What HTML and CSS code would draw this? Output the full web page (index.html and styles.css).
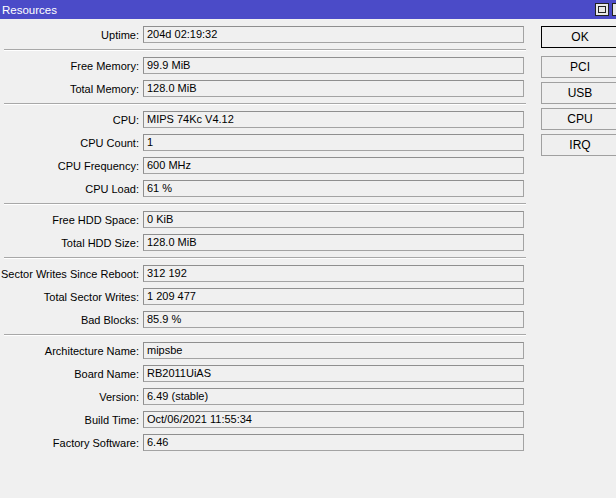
FILE: index.html
```html
<!DOCTYPE html>
<html>
<head>
<meta charset="utf-8">
<title>Resources</title>
<link rel="stylesheet" href="styles.css">
</head>
<body>
<div class="win">
  <div class="titlebar">
    <span class="title">Resources</span>
    <span class="tb-icons"><i class="tb-max"></i><i class="tb-close"></i></span>
  </div>
  <div class="main">
    <div class="form">
      <div class="row"><label>Uptime:</label><div class="field">204d 02:19:32</div></div>
      <div class="sep"></div>
      <div class="row"><label>Free Memory:</label><div class="field">99.9 MiB</div></div>
      <div class="row"><label>Total Memory:</label><div class="field">128.0 MiB</div></div>
      <div class="sep"></div>
      <div class="row"><label>CPU:</label><div class="field">MIPS 74Kc V4.12</div></div>
      <div class="row"><label>CPU Count:</label><div class="field">1</div></div>
      <div class="row"><label>CPU Frequency:</label><div class="field">600 MHz</div></div>
      <div class="row"><label>CPU Load:</label><div class="field">61 %</div></div>
      <div class="sep"></div>
      <div class="row"><label>Free HDD Space:</label><div class="field">0 KiB</div></div>
      <div class="row"><label>Total HDD Size:</label><div class="field">128.0 MiB</div></div>
      <div class="sep"></div>
      <div class="row"><label>Sector Writes Since Reboot:</label><div class="field">312 192</div></div>
      <div class="row"><label>Total Sector Writes:</label><div class="field">1 209 477</div></div>
      <div class="row"><label>Bad Blocks:</label><div class="field">85.9 %</div></div>
      <div class="sep"></div>
      <div class="row"><label>Architecture Name:</label><div class="field">mipsbe</div></div>
      <div class="row"><label>Board Name:</label><div class="field">RB2011UiAS</div></div>
      <div class="row"><label>Version:</label><div class="field">6.49 (stable)</div></div>
      <div class="row"><label>Build Time:</label><div class="field">Oct/06/2021 11:55:34</div></div>
      <div class="row"><label>Factory Software:</label><div class="field">6.46</div></div>
    </div>
    <div class="buttons">
      <button class="btn default">OK</button>
      <button class="btn">PCI</button>
      <button class="btn">USB</button>
      <button class="btn">CPU</button>
      <button class="btn">IRQ</button>
    </div>
  </div>
</div>
</body>
</html>
```

FILE: styles.css
```css
html, body { margin:0; padding:0; }
body { width:616px; height:498px; overflow:hidden; background:#f0f0f0; color:#000;
  font:11px "Liberation Sans Narrow", "Liberation Sans", Arial, sans-serif; }

.titlebar { height:19px; background:#4b4bc8; color:#fff; font-size:11.5px; display:flex; align-items:center; justify-content:space-between; padding-left:2px; }
.tb-icons { display:flex; gap:3px; align-self:flex-start; padding-top:3px; margin-right:-10px; }
.tb-icons i { display:block; width:12px; height:11px; border:1px solid #222; background:#e8e8e8; position:relative; }
.tb-max::after { content:""; position:absolute; left:2px; top:2px; width:6px; height:5px; border:1px solid #222; }

.main { display:flex; padding-top:7px; }
.form { flex-shrink:0; width:526px; display:flex; flex-direction:column; gap:6px; }
.row { display:flex; align-items:center; height:17px; }
.row label { width:143px; box-sizing:border-box; padding-right:4px; text-align:right; white-space:nowrap; }
.field { width:381px; height:17px; box-sizing:border-box; border:1px solid #a3a3a3; border-top-color:#8f8f8f; border-left-color:#8f8f8f; padding-left:3px; line-height:15px; white-space:nowrap; }
.sep { margin-left:4px; height:0; border-top:1px solid #a8a8a8; border-bottom:1px solid #fff; }

.buttons { flex-shrink:0; margin-left:15px; display:flex; flex-direction:column; gap:4px; }
.btn { width:78px; height:22px; box-sizing:border-box; border:1px solid #a0a0a0; background:#efefef; font:inherit; font-size:12px; color:#000; padding:0; text-align:center; }
.btn.default { border-color:#000; margin-bottom:4px; }
```
